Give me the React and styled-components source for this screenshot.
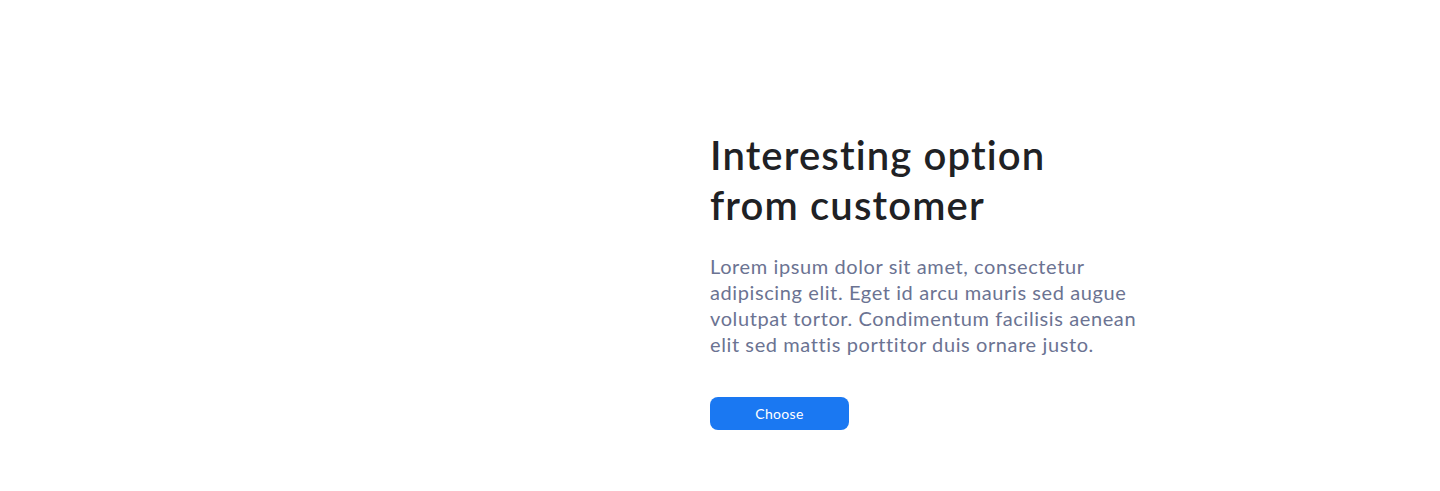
import React from "react";
import styled, { createGlobalStyle } from "styled-components";

const Global = createGlobalStyle`
  html, body { margin: 0; padding: 0; background: #ffffff; }
  body { font-family: "Lato", "Noto Sans", sans-serif; -webkit-font-smoothing: antialiased; }
`;

const Section = styled.section`
  display: grid;
  grid-template-columns: 710px 1fr;
  min-height: 491px;
  box-sizing: border-box;
  padding: 130px 0 60px;
`;

const MediaSlot = styled.div``;

const Content = styled.div`
  display: flex;
  flex-direction: column;
  align-items: flex-start;
`;

const Title = styled.h2`
  margin: 0;
  font-size: 40px;
  line-height: 50px;
  font-weight: 600;
  color: #202124;
  letter-spacing: 1.15px;
`;

const Text = styled.p`
  margin: 23px 0 0;
  max-width: 432px;
  font-size: 20px;
  line-height: 26px;
  font-weight: 400;
  letter-spacing: 0.6px;
  color: #6b7392;
`;

const Button = styled.button`
  margin-top: 40px;
  width: 139px;
  height: 33px;
  border: none;
  border-radius: 8px;
  background: #1a78f2;
  color: #ffffff;
  font-family: inherit;
  font-size: 14px;
  letter-spacing: 0.3px;
  cursor: pointer;
`;

export default function App() {
  return (
    <>
      <Global />
      <Section>
        <MediaSlot />
        <Content>
          <Title>
            Interesting option
            <br />
            from customer
          </Title>
          <Text>
            Lorem ipsum dolor sit amet, consectetur adipiscing elit. Eget id arcu mauris sed augue
            volutpat tortor. Condimentum facilisis aenean elit sed mattis porttitor duis ornare justo.
          </Text>
          <Button>Choose</Button>
        </Content>
      </Section>
    </>
  );
}
